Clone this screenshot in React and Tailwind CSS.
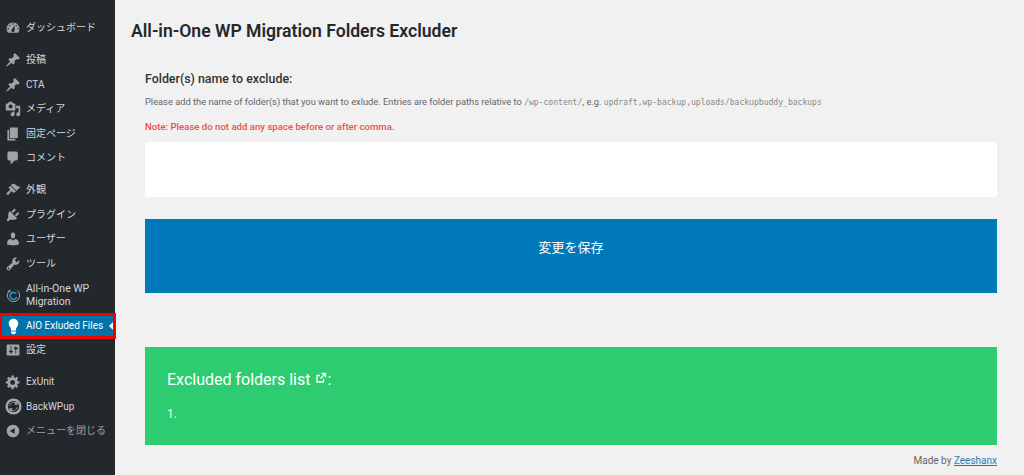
import React from "react";

const P = ({ d, size = 16 }) => (
  <svg viewBox="0 0 20 20" width={size} height={size} fill="currentColor" fillRule="evenodd">
    <path d={d} />
  </svg>
);

const d = {
  dash: "M3.76 16h12.48c1.1-1.37 1.76-3.11 1.76-5 0-4.42-3.58-8-8-8s-8 3.58-8 8c0 1.89.66 3.63 1.76 5zM10 4c.55 0 1 .45 1 1s-.45 1-1 1-1-.45-1-1 .45-1 1-1zM6 6c.55 0 1 .45 1 1s-.45 1-1 1-1-.45-1-1 .45-1 1-1zm8 0c.55 0 1 .45 1 1s-.45 1-1 1-1-.45-1-1 .45-1 1-1zm-5.37 5.55L12 7v6c0 1.1-.9 2-2 2s-2-.9-2-2c0-.57.24-1.08.63-1.45zM4 10c.55 0 1 .45 1 1s-.45 1-1 1-1-.45-1-1 .45-1 1-1zm12 0c.55 0 1 .45 1 1s-.45 1-1 1-1-.45-1-1 .45-1 1-1z",
  pin: "M10.44 3.02l1.82-1.82 6.36 6.35-1.83 1.82c-1.05-.68-2.48-.57-3.41.36l-.75.75c-.92.93-1.04 2.35-.35 3.41l-1.83 1.82-2.41-2.41-2.8 2.79c-.42.42-3.38 2.71-3.8 2.29s1.86-3.39 2.28-3.81l2.79-2.79L4.1 9.36l1.83-1.82c1.05.69 2.48.57 3.4-.36l.75-.75c.93-.92 1.05-2.35.36-3.41z",
  media: "M13 11V4c0-.55-.45-1-1-1h-1.67L9 1H5L3.67 3H2c-.55 0-1 .45-1 1v7c0 .55.45 1 1 1h10c.55 0 1-.45 1-1zM7 4.5c1.38 0 2.5 1.12 2.5 2.5S8.38 9.5 7 9.5 4.5 8.38 4.5 7 5.62 4.5 7 4.5zM14 6h5v10.5c0 1.38-1.12 2.5-2.5 2.5S14 17.88 14 16.5s1.12-2.5 2.5-2.5c.17 0 .34.02.5.05V9h-3V6zm-4 8.05V13h2v3.5c0 1.38-1.12 2.5-2.5 2.5S7 17.88 7 16.5 8.12 14 9.5 14c.17 0 .34.02.5.05z",
  page: "M6 15V2h10v13H6zm-1 1h8v2H3V5h2v11z",
  comment: "M5 2h9c1.1 0 2 .9 2 2v7c0 1.1-.9 2-2 2h-2l-5 5v-5H5c-1.1 0-2-.9-2-2V4c0-1.1.9-2 2-2z",
  brush: "M14.48 11.06L7.41 3.99l1.5-1.5c.5-.56 2.3-.47 3.51.32 1.21.8 1.43 1.28 2.91 2.1 1.18.64 2.45 1.26 4.45.85zm-.71.71L6.7 4.7 4.93 6.47c-.39.39-.39 1.02 0 1.41l1.06 1.06c.39.39.39 1.03 0 1.42-.6.6-1.43 1.11-2.21 1.69-.35.26-.7.53-1.01.84-1.08 1.07-.96 2.35-.5 2.8.46.46 1.74.57 2.81-.5.31-.31.58-.66.84-1.01.58-.78 1.09-1.61 1.69-2.21.39-.39 1.03-.39 1.42 0l1.06 1.06c.39.39 1.02.39 1.41 0z",
  plug: "M13.11 4.36L9.87 7.6 8 5.73l3.24-3.24c.35-.34 1.05-.2 1.56.32.52.51.66 1.21.31 1.55zm-8 1.77l.91-1.12 9.01 9.01-1.19.84c-.71.71-2.63 1.16-3.82 1.16H6.14L4.9 17.26c-.59.59-1.54.59-2.12 0-.59-.58-.59-1.53 0-2.12l1.24-1.24v-3.88c0-1.13.4-3.19 1.09-3.89zm7.26 3.97l3.24-3.24c.34-.35 1.04-.21 1.55.31.52.51.66 1.21.31 1.55l-3.24 3.25z",
  user: "M10 9.25c-2.27 0-2.73-3.44-2.73-3.44C7 4.02 7.82 2 9.97 2c2.16 0 2.98 2.02 2.71 3.81 0 0-.41 3.44-2.68 3.44zm0 2.57L12.72 10c2.39 0 4.52 2.33 4.52 4.53v2.49s-3.65 1.13-7.24 1.13c-3.65 0-7.24-1.13-7.24-1.13v-2.49c0-2.25 1.94-4.48 4.47-4.48z",
  tool: "M16.68 9.77c-1.34 1.34-3.3 1.67-4.95.99l-5.41 6.52c-.99.99-2.59.99-3.58 0s-.99-2.59 0-3.57l6.52-5.42c-.68-1.65-.35-3.61.99-4.95 1.28-1.28 3.12-1.62 4.72-1.06l-2.89 2.89 2.82 2.82 2.86-2.87c.53 1.58.18 3.39-1.08 4.65zM3.81 16.21c.4.39 1.04.39 1.43 0 .4-.4.4-1.04 0-1.43-.39-.4-1.03-.4-1.43 0-.39.39-.39 1.03 0 1.43z",
  bulb: "M10 1c3.11 0 5.63 2.52 5.63 5.62 0 1.84-2.03 4.58-2.03 4.58-.33.44-.6 1.25-.6 1.8v1c0 .55-.45 1-1 1H8c-.55 0-1-.45-1-1v-1c0-.55-.27-1.36-.6-1.8 0 0-2.02-2.74-2.02-4.58C4.38 3.52 6.89 1 10 1zM7 16.87V16h6v.87c0 .62-.13 1.13-.75 1.13H12c0 .62-.4 1-1.02 1h-2c-.61 0-.98-.38-.98-1h-.25c-.62 0-.75-.51-.75-1.13z",
  settings: "M18 16V4c0-.55-.45-1-1-1H3c-.55 0-1 .45-1 1v12c0 .55.45 1 1 1h14c.55 0 1-.45 1-1zM8 11h1c.55 0 1 .45 1 1s-.45 1-1 1H8v1.5c0 .28-.22.5-.5.5s-.5-.22-.5-.5V13H6c-.55 0-1-.45-1-1s.45-1 1-1h1V5.5c0-.28.22-.5.5-.5s.5.22.5.5V11zm5-2h-1c-.55 0-1-.45-1-1s.45-1 1-1h1V5.5c0-.28.22-.5.5-.5s.5.22.5.5V7h1c.55 0 1 .45 1 1s-.45 1-1 1h-1v5.5c0 .28-.22.5-.5.5s-.5-.22-.5-.5V9z",
  gear: "M18 12h-2.18c-.17.7-.44 1.35-.81 1.93l1.54 1.54-2.1 2.1-1.54-1.54c-.58.36-1.23.63-1.91.79V19H8v-2.18c-.68-.16-1.33-.43-1.91-.79l-1.54 1.54-2.12-2.12 1.54-1.54c-.36-.58-.63-1.23-.79-1.91H1V9.03h2.17c.16-.7.44-1.35.8-1.94L2.43 5.55l2.1-2.1 1.54 1.54c.58-.37 1.24-.64 1.93-.81V2h3v2.18c.68.16 1.33.43 1.91.79l1.54-1.54 2.12 2.12-1.54 1.54c.36.59.64 1.24.8 1.94H18V12zm-8.5 1.5c1.66 0 3-1.34 3-3s-1.34-3-3-3-3 1.34-3 3 1.34 3 3 3z",
  collapse: "M10 2.16c4.33 0 7.84 3.51 7.84 7.84s-3.51 7.84-7.84 7.84S2.16 14.33 2.16 10 5.71 2.16 10 2.16zm2 11.72V6.12L6.18 9.97z",
};

const Migration = () => (
  <svg viewBox="0 0 20 20" width="15" height="15" fill="none">
    <path d="M5 3.5a8.2 8.2 0 1 0 10 0" stroke="#a0a5aa" strokeWidth="1.3" />
    <path d="M5.5 1.5l.5 4-4-.5z" fill="#a0a5aa" />
    <path d="M13.5 7.5a4.6 4.6 0 1 0 .8 4.5" stroke="#1b8fd0" strokeWidth="2.4" />
  </svg>
);
const BackWPup = () => (
  <svg viewBox="0 0 20 20" width="17" height="17" fill="none">
    <circle cx="10" cy="10" r="9.5" fill="currentColor" />
    <circle cx="10" cy="10" r="6.5" fill="#23282d" />
    <path d="M6 9a4 4 0 0 1 6-3l-1 2 4 0-1-4-1 1a6 6 0 0 0-8 4zM14 11a4 4 0 0 1-6 3l1-2-4 0 1 4 1-1a6 6 0 0 0 8-4z" fill="currentColor" />
  </svg>
);

const rows = [
  [{ t: "ダッシュボード", I: <P d={d.dash} /> }],
  [
    { t: "投稿", I: <P d={d.pin} /> },
    { t: "CTA", I: <P d={d.pin} /> },
    { t: "メディア", I: <P d={d.media} /> },
    { t: "固定ページ", I: <P d={d.page} /> },
    { t: "コメント", I: <P d={d.comment} /> },
  ],
  [
    { t: "外観", I: <P d={d.brush} /> },
    { t: "プラグイン", I: <P d={d.plug} /> },
    { t: "ユーザー", I: <P d={d.user} /> },
    { t: "ツール", I: <P d={d.tool} /> },
    { t: "All-in-One WP Migration", I: <Migration />, tall: true },
    { t: "AIO Exluded Files", I: <P d={d.bulb} size={17} />, active: true },
    { t: "設定", I: <P d={d.settings} /> },
  ],
  [
    { t: "ExUnit", I: <P d={d.gear} /> },
    { t: "BackWPup", I: <BackWPup /> },
    { t: "メニューを閉じる", I: <P d={d.collapse} />, dim: true },
  ],
];

function Item({ item }) {
  const { t, I, tall, active, dim } = item;
  return (
    <li
      className={
        "relative flex items-center pl-[4px] pr-[2px] " +
        (tall ? "h-[38px] " : active ? "h-[24px] " : "h-[24.5px] ") +
        (active
          ? "bg-[#0073aa] text-white outline-[3px] outline-[#f00000] -outline-offset-[2px] "
          : dim
          ? "text-[#9a9fa4] "
          : "text-[#d5d7d9] ")
      }
    >
      <span className={"w-[18px] shrink-0 flex justify-center " + (active ? "text-white" : "text-[#a0a5aa]")}>{I}</span>
      <span className={"ml-[4px] " + (tall ? "text-[10.5px] leading-[13px]" : "text-[10px] leading-[14px] whitespace-nowrap")}>
        {tall ? (<>All-in-One WP<br />Migration</>) : t}
      </span>
      {active && (
        <span className="absolute right-[2px] top-[8px] w-0 h-0 border-y-[4px] border-y-transparent border-r-[4px] border-r-white" />
      )}
    </li>
  );
}

export default function App() {
  return (
    <div className="flex w-[1024px] h-[475px] overflow-hidden bg-[#f1f1f1] font-['Roboto','Noto_Sans_CJK_JP',sans-serif] text-[#444]">
      <aside className="w-[115px] shrink-0 bg-[#23282d] pt-[16px]">
        {rows.map((g, i) => (
          <ul key={i} className="mb-[7.5px]">
            {g.map((it) => (
              <Item key={it.t} item={it} />
            ))}
          </ul>
        ))}
      </aside>
      <main className="flex-1 pl-[16px] pr-[27px]">
        <h1 className="mt-[20px] text-[17.6px] leading-[22px] font-semibold text-[#23282d]">All-in-One WP Migration Folders Excluder</h1>
        <div className="pl-[14px] mt-[28px]">
          <h2 className="text-[12.4px] leading-[18px] font-medium text-[#333]">Folder(s) name to exclude:</h2>
          <p className="mt-[7px] text-[9.3px] leading-[14px] text-[#666]">
            Please add the name of folder(s) that you want to exlude. Entries are folder paths relative to{" "}
            <code className="font-['DejaVu_Sans_Mono',monospace] text-[8.05px] font-light text-[#888]">/wp-content/</code>, e.g.{" "}
            <code className="font-['DejaVu_Sans_Mono',monospace] text-[8.05px] font-light text-[#888]">updraft,wp-backup,uploads/backupbuddy_backups</code>
          </p>
          <p className="mt-[10px] text-[9.6px] leading-[14px] font-medium text-[#f04d4d]">Note: Please do not add any space before or after comma.</p>
          <div className="mt-[8px] h-[55px] bg-white rounded-[3px]" />
          <button className="mt-[22px] block w-full h-[74px] pb-[17px] bg-[#0079ba] text-white text-[13px]">変更を保存</button>
          <section className="mt-[54px] h-[98px] bg-[#2ecc71] text-white pl-[22px] pt-[23px]">
            <h3 className="text-[16px] leading-[20px] font-normal flex items-start">
              Excluded folders list
              <svg viewBox="0 0 12 12" className="w-[12px] h-[12px] ml-[5px] mt-[2px]" fill="none" stroke="currentColor" strokeWidth="1.3">
                <path d="M8.5 7v3H2V3.5h3M6.5 1.5h4v4M10.5 1.5 5.5 6.5" />
              </svg>
              <span>:</span>
            </h3>
            <p className="mt-[17px] text-[12px] leading-[14px] text-[#eafff2]">1.</p>
          </section>
          <p className="mt-[9px] text-right text-[10px] leading-[14px] text-[#666]">
            Made by <span className="text-[#2a7ab0] underline">Zeeshanx</span>
          </p>
        </div>
      </main>
    </div>
  );
}
